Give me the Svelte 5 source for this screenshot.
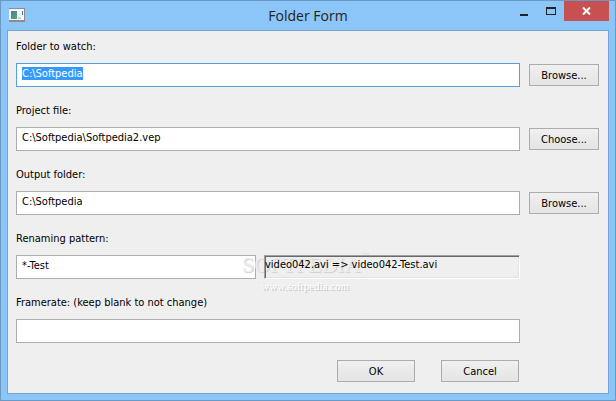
<script lang="ts">
    import { onMount } from 'svelte';

    let folder = $state('C:\\Softpedia');
    let project = $state('C:\\Softpedia\\Softpedia2.vep');
    let output = $state('C:\\Softpedia');
    let pattern = $state('*-Test');
    let framerate = $state('');

    const sample = 'video042';
    let preview = $derived(`${sample}.avi => ${pattern.replace('*', sample)}.avi`);

    let folderInput: HTMLInputElement;

    onMount(() => {
        folderInput.focus();
        folderInput.select();
    });
</script>

<main class="window">
    <header class="titlebar">
        <svg class="app-icon" viewBox="0 0 16 14" aria-hidden="true">
            <defs>
                <linearGradient id="screen" x1="0" y1="0" x2="1" y2="1">
                    <stop offset="0" stop-color="#4a7f9c" />
                    <stop offset="1" stop-color="#56a67c" />
                </linearGradient>
            </defs>
            <rect x="0" y="0" width="16" height="14" fill="#8c8c8c" />
            <rect x="0" y="1" width="15" height="11" fill="#f6f6f6" />
            <rect x="2" y="3" width="6" height="8" fill="url(#screen)" />
            <rect x="9" y="9" width="3" height="2" fill="#d0d0d0" />
            <rect x="13" y="3" width="1" height="4" fill="#3f7f86" />
        </svg>
        <h1>Folder Form</h1>
        <div class="controls">
            <button class="control" type="button" aria-label="Minimize">
                <svg width="10" height="10" viewBox="0 0 10 10"><rect x="1" y="8" width="8" height="2" fill="#222" /></svg>
            </button>
            <button class="control" type="button" aria-label="Maximize">
                <svg width="10" height="10" viewBox="0 0 10 10">
                    <path d="M0 1h10v8H0zM1 3v5h8V3z" fill="#222" fill-rule="evenodd" />
                </svg>
            </button>
            <button class="control close" type="button" aria-label="Close">
                <svg width="9" height="8" viewBox="0 0 9 8">
                    <path d="M1 0.5l7 7M8 0.5l-7 7" stroke="#fff" stroke-width="2" />
                </svg>
            </button>
        </div>
    </header>

    <form class="client" onsubmit={(e) => e.preventDefault()}>
        <label for="folder">Folder to watch:</label>
        <div class="row">
            <input id="folder" type="text" bind:value={folder} bind:this={folderInput} />
            <button class="browse" type="button">Browse...</button>
        </div>

        <label for="project">Project file:</label>
        <div class="row">
            <input id="project" type="text" bind:value={project} />
            <button class="browse" type="button">Choose...</button>
        </div>

        <label for="output">Output folder:</label>
        <div class="row">
            <input id="output" type="text" bind:value={output} />
            <button class="browse" type="button">Browse...</button>
        </div>

        <label for="pattern">Renaming pattern:</label>
        <div class="row inset pair">
            <input id="pattern" type="text" bind:value={pattern} />
            <output class="preview" for="pattern">{preview}</output>
            <div class="watermark" aria-hidden="true">
                <span class="brand">SOFTPEDIA<sup>™</sup></span>
                <span class="site">www.softpedia.com</span>
            </div>
        </div>

        <label for="framerate">Framerate: (keep blank to not change)</label>
        <div class="row inset">
            <input id="framerate" type="text" bind:value={framerate} />
        </div>

        <div class="actions inset">
            <button type="submit">OK</button>
            <button type="button">Cancel</button>
        </div>
    </form>
</main>

<style>
    :global(body) {
        margin: 0;
    }

    .window {
        box-sizing: border-box;
        display: flex;
        flex-direction: column;
        min-height: 100vh;
        padding: 0 6px 6px;
        border: 1px solid #6a99c6;
        background: #8cc6f8;
        color: #000;
        font-family: "DejaVu Sans Condensed", "DejaVu Sans", sans-serif;
        font-size: 11px;
    }

    .titlebar {
        display: grid;
        grid-template-columns: 1fr auto 1fr;
        height: 29px;
    }

    .app-icon {
        width: 16px;
        height: 14px;
        margin: 7px 0 0 2px;
    }

    h1 {
        margin: 0;
        font: 14px/30px "Open Sans", sans-serif;
        color: #222;
    }

    .controls {
        display: flex;
        justify-content: flex-end;
        height: 20px;
    }

    .control {
        display: flex;
        align-items: center;
        justify-content: center;
        width: 27px;
        height: 20px;
        padding: 0;
        border: none;
        background: none;
    }

    .close {
        width: 45px;
        background: #c75050;
    }

    .client {
        flex: 1;
        padding: 8px 9px 11px 8px;
        border: 1px solid #74a5d5;
        background: #efefef;
    }

    label {
        display: block;
        width: fit-content;
        margin-bottom: 8px;
        line-height: 16px;
    }

    .row {
        display: flex;
        align-items: center;
        gap: 9px;
        margin-bottom: 16px;
    }

    .inset {
        margin-right: 79px;
    }

    .pair {
        position: relative;
        display: grid;
        grid-template-columns: 15fr 16fr;
        gap: 8px;
    }

    input {
        box-sizing: border-box;
        flex: 1;
        min-width: 0;
        height: 24px;
        padding: 0 5px 4px;
        border: 1px solid #abadb3;
        outline: none;
        background: #fff;
        color: #000;
        font: inherit;
    }

    input:focus {
        border-color: #569de5;
    }

    input::selection {
        background: #3399ff;
        color: #fff;
    }

    /* stays above the watermark so the result is readable */
    .preview {
        position: relative;
        z-index: 1;
        box-sizing: border-box;
        min-width: 0;
        height: 24px;
        border: 1px solid;
        border-color: #a0a0a0 #fff #fff #a0a0a0;
        box-shadow: inset 1px 1px #696969, inset -1px -1px #e3e3e3;
        line-height: 18px;
        white-space: nowrap;
    }

    .client button {
        height: 22px;
        padding: 0;
        border: 1px solid #acacac;
        background: linear-gradient(#f0f0f0, #e4e4e4);
        color: #000;
        font: inherit;
    }

    .client .browse {
        width: 70px;
    }

    .actions {
        display: flex;
        justify-content: flex-end;
        gap: 26px;
        margin-top: 17px;
        padding-right: 1px;
    }

    .actions button {
        width: 78px;
    }

    .watermark {
        position: absolute;
        top: -4px;
        left: 226px;
        display: flex;
        flex-direction: column;
        align-items: center;
        pointer-events: none;
        color: #ececec;
        text-shadow: 1px 1px #d2d2d2;
    }

    .brand {
        font: 22px/28px "Liberation Serif", serif;
    }

    sup {
        font-size: 8px;
        line-height: 8px;
        vertical-align: top;
    }

    .site {
        color: #fff;
        text-shadow: 1px 1px #c4c4c4;
        font: 11px/14px "Liberation Serif", serif;
    }
</style>
